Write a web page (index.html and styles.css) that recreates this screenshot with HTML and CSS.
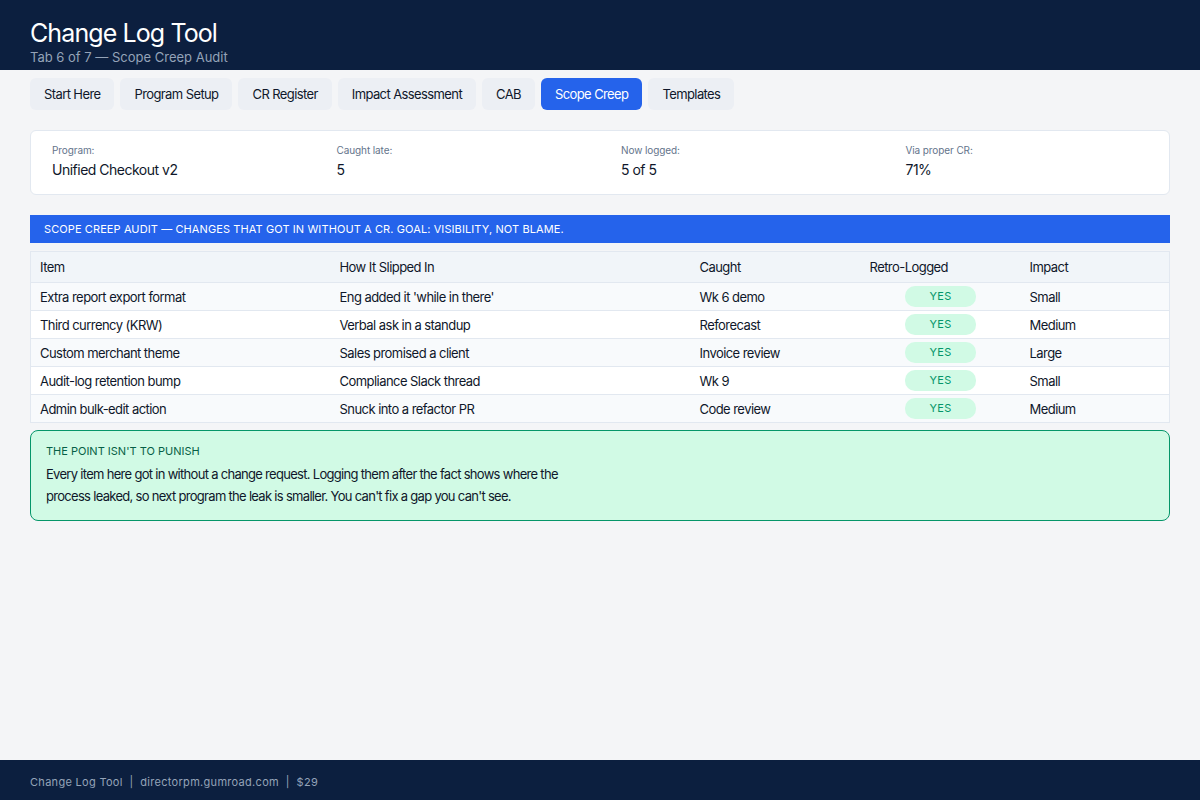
FILE: index.html
```html
<!DOCTYPE html>
<html lang="en">
<head>
<meta charset="utf-8">
<title>Change Log Tool — Scope Creep Audit</title>
<link rel="stylesheet" href="styles.css">
</head>
<body>
<div class="page">
  <header class="app-header">
    <h1 class="app-title">Change Log Tool</h1>
    <div class="app-subtitle">Tab 6 of 7 — Scope Creep Audit</div>
  </header>

  <nav class="tabs">
    <span class="tab">Start Here</span>
    <span class="tab">Program Setup</span>
    <span class="tab">CR Register</span>
    <span class="tab">Impact Assessment</span>
    <span class="tab">CAB</span>
    <span class="tab tab-active">Scope Creep</span>
    <span class="tab">Templates</span>
  </nav>

  <main class="content">
    <section class="summary">
      <div class="summary-item">
        <div class="summary-label">Program:</div>
        <div class="summary-value">Unified Checkout v2</div>
      </div>
      <div class="summary-item">
        <div class="summary-label">Caught late:</div>
        <div class="summary-value">5</div>
      </div>
      <div class="summary-item">
        <div class="summary-label">Now logged:</div>
        <div class="summary-value">5 of 5</div>
      </div>
      <div class="summary-item">
        <div class="summary-label">Via proper CR:</div>
        <div class="summary-value">71%</div>
      </div>
    </section>

    <div class="banner">Scope Creep Audit — changes that got in without a CR. Goal: visibility, not blame.</div>

    <table class="audit">
      <colgroup>
        <col class="c-item">
        <col class="c-how">
        <col class="c-caught">
        <col class="c-retro">
        <col class="c-impact">
      </colgroup>
      <thead>
        <tr>
          <th>Item</th>
          <th>How It Slipped In</th>
          <th>Caught</th>
          <th>Retro-Logged</th>
          <th>Impact</th>
        </tr>
      </thead>
      <tbody>
        <tr>
          <td>Extra report export format</td>
          <td>Eng added it 'while in there'</td>
          <td>Wk 6 demo</td>
          <td class="center"><span class="badge">YES</span></td>
          <td>Small</td>
        </tr>
        <tr>
          <td>Third currency (KRW)</td>
          <td>Verbal ask in a standup</td>
          <td>Reforecast</td>
          <td class="center"><span class="badge">YES</span></td>
          <td>Medium</td>
        </tr>
        <tr>
          <td>Custom merchant theme</td>
          <td>Sales promised a client</td>
          <td>Invoice review</td>
          <td class="center"><span class="badge">YES</span></td>
          <td>Large</td>
        </tr>
        <tr>
          <td>Audit-log retention bump</td>
          <td>Compliance Slack thread</td>
          <td>Wk 9</td>
          <td class="center"><span class="badge">YES</span></td>
          <td>Small</td>
        </tr>
        <tr>
          <td>Admin bulk-edit action</td>
          <td>Snuck into a refactor PR</td>
          <td>Code review</td>
          <td class="center"><span class="badge">YES</span></td>
          <td>Medium</td>
        </tr>
      </tbody>
    </table>

    <aside class="note">
      <div class="note-title">The point isn't to punish</div>
      <p class="note-body">Every item here got in without a change request. Logging them after the fact shows where the process leaked, so next program the leak is smaller. You can't fix a gap you can't see.</p>
    </aside>
  </main>

  <footer class="app-footer">Change Log Tool &nbsp;|&nbsp; directorpm.gumroad.com &nbsp;|&nbsp; $29</footer>
</div>
</body>
</html>
```

FILE: styles.css
```css
* {
  box-sizing: border-box;
}

html, body {
  margin: 0;
  padding: 0;
  height: 100%;
}

body {
  font-family: Inter, "Liberation Sans", sans-serif;
  color: #0f172a;
  background: #f4f5f7;
}

.page {
  min-height: 100vh;
  display: flex;
  flex-direction: column;
}

/* Top bar */
.app-header {
  background: #0c1f3f;
  color: #ffffff;
  padding: 17px 30px 4px;
  height: 70px;
}

.app-title {
  margin: 0;
  font-size: 25px;
  font-weight: 400;
  line-height: 32px;
  letter-spacing: -0.9px;
}

.app-subtitle {
  font-size: 13px;
  line-height: 16px;
  color: #94a3b8;
}

/* Tab strip */
.tabs {
  display: flex;
  gap: 6px;
  padding: 8px 30px 0;
}

.tab {
  background: #eceff4;
  color: #0f172a;
  font-size: 13px;
  line-height: 16px;
  letter-spacing: -0.6px;
  padding: 8px 14px;
  border-radius: 6px;
}

.tab-active {
  background: #2563eb;
  color: #ffffff;
}

/* Main area */
.content {
  flex: 1;
  padding: 20px 30px 20px;
}

.summary {
  display: grid;
  grid-template-columns: repeat(4, 1fr);
  background: #ffffff;
  border: 1px solid #e2e8f0;
  border-radius: 6px;
}

.summary-item {
  padding: 12px 21px 14px;
}

.summary-label {
  font-size: 10px;
  line-height: 14px;
  color: #64748b;
  letter-spacing: -0.1px;
}

.summary-value {
  font-size: 14px;
  line-height: 20px;
  margin-top: 3px;
  color: #0f172a;
  letter-spacing: -0.5px;
}

.banner {
  margin-top: 20px;
  background: #2563eb;
  color: #ffffff;
  font-size: 11px;
  line-height: 28px;
  padding: 0 14px;
  text-transform: uppercase;
  letter-spacing: 0.1px;
}

/* Audit table */
.audit {
  margin-top: 8px;
  width: 100%;
  border-collapse: collapse;
  border: 1px solid #e2e8f0;
  font-size: 13px;
  letter-spacing: -0.55px;
  table-layout: fixed;
}

.c-item { width: 300px; }
.c-how { width: 360px; }
.c-caught { width: 170px; }
.c-retro { width: 160px; }
.c-impact { width: auto; }

.audit th {
  background: #f1f5f9;
  font-weight: 400;
  text-align: left;
  height: 31px;
  padding: 0 9px;
  border-bottom: 1px solid #e2e8f0;
}

.audit td {
  height: 28px;
  padding: 0 9px;
  border-bottom: 1px solid #e2e8f0;
}

.audit tbody tr:nth-child(odd) td {
  background: #f8fafc;
}

.audit tbody tr:nth-child(even) td {
  background: #ffffff;
}

.audit td.center {
  text-align: center;
}

.badge {
  display: inline-block;
  width: 71px;
  height: 21px;
  line-height: 21px;
  border-radius: 10px;
  background: #d1fae5;
  color: #059669;
  font-size: 11px;
  letter-spacing: 0.3px;
  text-align: center;
  vertical-align: middle;
}

/* Closing note */
.note {
  margin-top: 7px;
  background: #d1fae5;
  border: 1px solid #059669;
  border-radius: 8px;
  padding: 12px 15px 13px;
}

.note-title {
  font-size: 11px;
  line-height: 16px;
  color: #065f46;
  text-transform: uppercase;
}

.note-body {
  margin: 4px 0 0;
  font-size: 13px;
  line-height: 22px;
  letter-spacing: -0.7px;
  max-width: 540px;
  color: #0f172a;
}

/* Bottom bar */
.app-footer {
  background: #0c1f3f;
  color: #94a3b8;
  font-size: 11px;
  height: 40px;
  line-height: 40px;
  padding: 2px 30px 0;
  letter-spacing: 0.3px;
}
```
